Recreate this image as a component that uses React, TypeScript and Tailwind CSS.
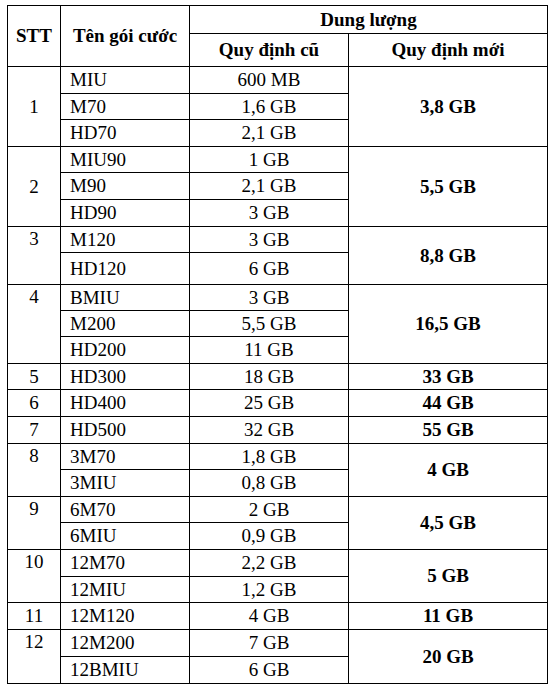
import React from "react";

type Row = { name: string; old: string; h: string };
type Group = { stt: string; sttAlign: "middle" | "top"; value: string; rows: Row[] };

const groups: Group[] = [
  {
    stt: "1",
    sttAlign: "middle",
    value: "3,8 GB",
    rows: [
      { name: "MIU", old: "600 MB", h: "h-[27px]" },
      { name: "M70", old: "1,6 GB", h: "h-[26px]" },
      { name: "HD70", old: "2,1 GB", h: "h-[27px]" },
    ],
  },
  {
    stt: "2",
    sttAlign: "middle",
    value: "5,5 GB",
    rows: [
      { name: "MIU90", old: "1 GB", h: "h-[26px]" },
      { name: "M90", old: "2,1 GB", h: "h-[27px]" },
      { name: "HD90", old: "3 GB", h: "h-[27px]" },
    ],
  },
  {
    stt: "3",
    sttAlign: "top",
    value: "8,8 GB",
    rows: [
      { name: "M120", old: "3 GB", h: "h-[26px]" },
      { name: "HD120", old: "6 GB", h: "h-[32px]" },
    ],
  },
  {
    stt: "4",
    sttAlign: "top",
    value: "16,5 GB",
    rows: [
      { name: "BMIU", old: "3 GB", h: "h-[26px]" },
      { name: "M200", old: "5,5 GB", h: "h-[26px]" },
      { name: "HD200", old: "11 GB", h: "h-[27px]" },
    ],
  },
  { stt: "5", sttAlign: "middle", value: "33 GB", rows: [{ name: "HD300", old: "18 GB", h: "h-[26px]" }] },
  { stt: "6", sttAlign: "middle", value: "44 GB", rows: [{ name: "HD400", old: "25 GB", h: "h-[27px]" }] },
  { stt: "7", sttAlign: "middle", value: "55 GB", rows: [{ name: "HD500", old: "32 GB", h: "h-[27px]" }] },
  {
    stt: "8",
    sttAlign: "top",
    value: "4 GB",
    rows: [
      { name: "3M70", old: "1,8 GB", h: "h-[26px]" },
      { name: "3MIU", old: "0,8 GB", h: "h-[27px]" },
    ],
  },
  {
    stt: "9",
    sttAlign: "top",
    value: "4,5 GB",
    rows: [
      { name: "6M70", old: "2 GB", h: "h-[26px]" },
      { name: "6MIU", old: "0,9 GB", h: "h-[27px]" },
    ],
  },
  {
    stt: "10",
    sttAlign: "top",
    value: "5 GB",
    rows: [
      { name: "12M70", old: "2,2 GB", h: "h-[27px]" },
      { name: "12MIU", old: "1,2 GB", h: "h-[26px]" },
    ],
  },
  { stt: "11", sttAlign: "middle", value: "11 GB", rows: [{ name: "12M120", old: "4 GB", h: "h-[27px]" }] },
  {
    stt: "12",
    sttAlign: "top",
    value: "20 GB",
    rows: [
      { name: "12M200", old: "7 GB", h: "h-[27px]" },
      { name: "12BMIU", old: "6 GB", h: "h-[27px]" },
    ],
  },
];

const cell = "border border-black p-0";

export default function App() {
  return (
    <div className="bg-white w-[552px] h-[690px] pt-[5px] pl-[7px] text-black font-['Liberation_Serif','Times_New_Roman',serif] text-[19px] leading-[22px]">
      <table className="table-fixed border-collapse w-[540px]">
        <colgroup>
          <col className="w-[53px]" />
          <col className="w-[129px]" />
          <col className="w-[159px]" />
          <col className="w-[199px]" />
        </colgroup>
        <thead>
          <tr className="h-[28px]">
            <th rowSpan={2} className={`${cell} font-bold text-center align-middle`}>
              STT
            </th>
            <th rowSpan={2} className={`${cell} font-bold text-center align-middle whitespace-nowrap`}>
              Tên gói cước
            </th>
            <th colSpan={2} className={`${cell} font-bold text-center align-middle`}>
              Dung lượng
            </th>
          </tr>
          <tr className="h-[33px]">
            <th className={`${cell} font-bold text-center align-middle`}>Quy định cũ</th>
            <th className={`${cell} font-bold text-center align-middle`}>Quy định mới</th>
          </tr>
        </thead>
        <tbody>
          {groups.map((g) =>
            g.rows.map((r, i) => (
              <tr key={g.stt + r.name} className={r.h}>
                {i === 0 && (
                  <td
                    rowSpan={g.rows.length}
                    className={`${cell} text-center ${g.sttAlign === "top" ? "align-top pt-[1px]" : "align-middle"}`}
                  >
                    {g.stt}
                  </td>
                )}
                <td className={`${cell} text-left pl-[9px] align-middle whitespace-nowrap`}>{r.name}</td>
                <td className={`${cell} text-center align-middle whitespace-nowrap`}>{r.old}</td>
                {i === 0 && (
                  <td rowSpan={g.rows.length} className={`${cell} text-center align-middle font-bold`}>
                    {g.value}
                  </td>
                )}
              </tr>
            ))
          )}
        </tbody>
      </table>
    </div>
  );
}
